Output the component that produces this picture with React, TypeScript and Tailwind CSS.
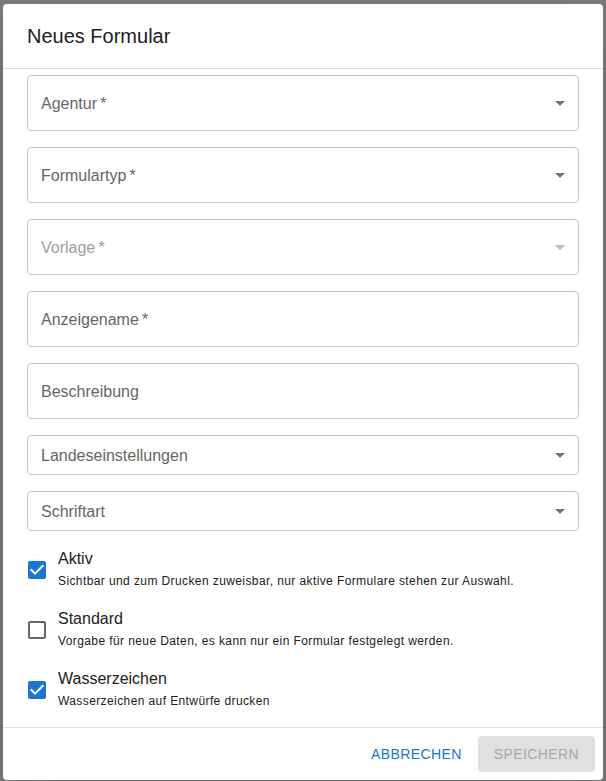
import React from "react";

const FONT = { fontFamily: '"Liberation Sans", Arial, Helvetica, sans-serif' };

function ArrowDrop({ disabled }: { disabled?: boolean }) {
  return (
    <svg viewBox="0 0 24 24" className="w-6 h-6 shrink-0" fill={disabled ? "#bdbdbd" : "#757575"}>
      <path d="M7 10l5 5 5-5z" />
    </svg>
  );
}

function Field({
  label,
  required,
  select,
  disabled,
  small,
}: {
  label: string;
  required?: boolean;
  select?: boolean;
  disabled?: boolean;
  small?: boolean;
}) {
  return (
    <div
      className={`flex items-center justify-between rounded border border-[#c4c4c4] pl-[13px] pr-[6px] ${
        small ? "h-10" : "h-14"
      }`}
    >
      <span className={`text-[16px] leading-[23px] ${disabled ? "text-[#9e9e9e]" : "text-[#666666]"}`}>
        {label}
        {required ? "\u2009*" : ""}
      </span>
      {select && <ArrowDrop disabled={disabled} />}
    </div>
  );
}

function CheckIcon({ checked }: { checked: boolean }) {
  return (
    <svg viewBox="0 0 24 24" className="w-6 h-6" fill={checked ? "#1976d2" : "#666666"}>
      {checked ? (
        <path d="M19 3H5c-1.11 0-2 .9-2 2v14c0 1.1.89 2 2 2h14c1.11 0 2-.9 2-2V5c0-1.1-.89-2-2-2zm-9 14l-5-5 1.41-1.41L10 14.17l7.59-7.59L19 8l-9 9z" />
      ) : (
        <path d="M19 5v14H5V5h14m0-2H5c-1.1 0-2 .9-2 2v14c0 1.1.9 2 2 2h14c1.1 0 2-.9 2-2V5c0-1.1-.9-2-2-2z" />
      )}
    </svg>
  );
}

function CheckRow({ title, desc, checked }: { title: string; desc: string; checked: boolean }) {
  return (
    <div className="flex items-center">
      <div className="-ml-[11px] w-[42px] h-[42px] flex items-center justify-center mt-[2px]">
        <CheckIcon checked={checked} />
      </div>
      <div className="flex flex-col">
        <span className="text-[16px] leading-[24px] text-[#212121]">{title}</span>
        <span className="text-[12px] leading-[20px] tracking-[0.4px] text-[#212121]">{desc}</span>
      </div>
    </div>
  );
}

export default function App() {
  return (
    <div className="w-[606px] h-[781px] bg-[#7a7a7a] flex overflow-hidden" style={FONT}>
      <div className="w-[3px] shrink-0" />
      <div className="mt-[4px] w-[600px] h-[776px] shrink-0 bg-white rounded flex flex-col overflow-hidden shadow-2xl">
        <div className="h-16 shrink-0 px-6 flex items-center text-[20px] text-[#212121]">Neues Formular</div>
        <div className="flex-1 border-t border-b border-[#e0e0e0] px-6 pt-[6px] flex flex-col">
          <div className="flex flex-col gap-4">
            <Field label="Agentur" required select />
            <Field label="Formulartyp" required select />
            <Field label="Vorlage" required select disabled />
            <Field label="Anzeigename" required />
            <Field label="Beschreibung" />
            <Field label="Landeseinstellungen" select small />
            <Field label="Schriftart" select small />
          </div>
          <div className="flex flex-col gap-4 mt-4">
            <CheckRow
              checked
              title="Aktiv"
              desc="Sichtbar und zum Drucken zuweisbar, nur aktive Formulare stehen zur Auswahl."
            />
            <CheckRow
              checked={false}
              title="Standard"
              desc="Vorgabe für neue Daten, es kann nur ein Formular festgelegt werden."
            />
            <CheckRow checked title="Wasserzeichen" desc="Wasserzeichen auf Entwürfe drucken" />
          </div>
        </div>
        <div className="h-[52px] shrink-0 flex items-center justify-end px-2 gap-2">
          <button className="h-9 px-2 rounded text-[14px] uppercase tracking-[0.4px] text-[#1976d2]">
            Abbrechen
          </button>
          <button className="h-9 px-4 rounded text-[14px] uppercase tracking-[0.4px] text-[#a6a6a6] bg-[#e0e0e0]" disabled>
            Speichern
          </button>
        </div>
      </div>
      <div className="w-[3px] shrink-0 flex flex-col">
        <div className="mt-[103px] h-px bg-[#6e6e6e]" />
      </div>
    </div>
  );
}
